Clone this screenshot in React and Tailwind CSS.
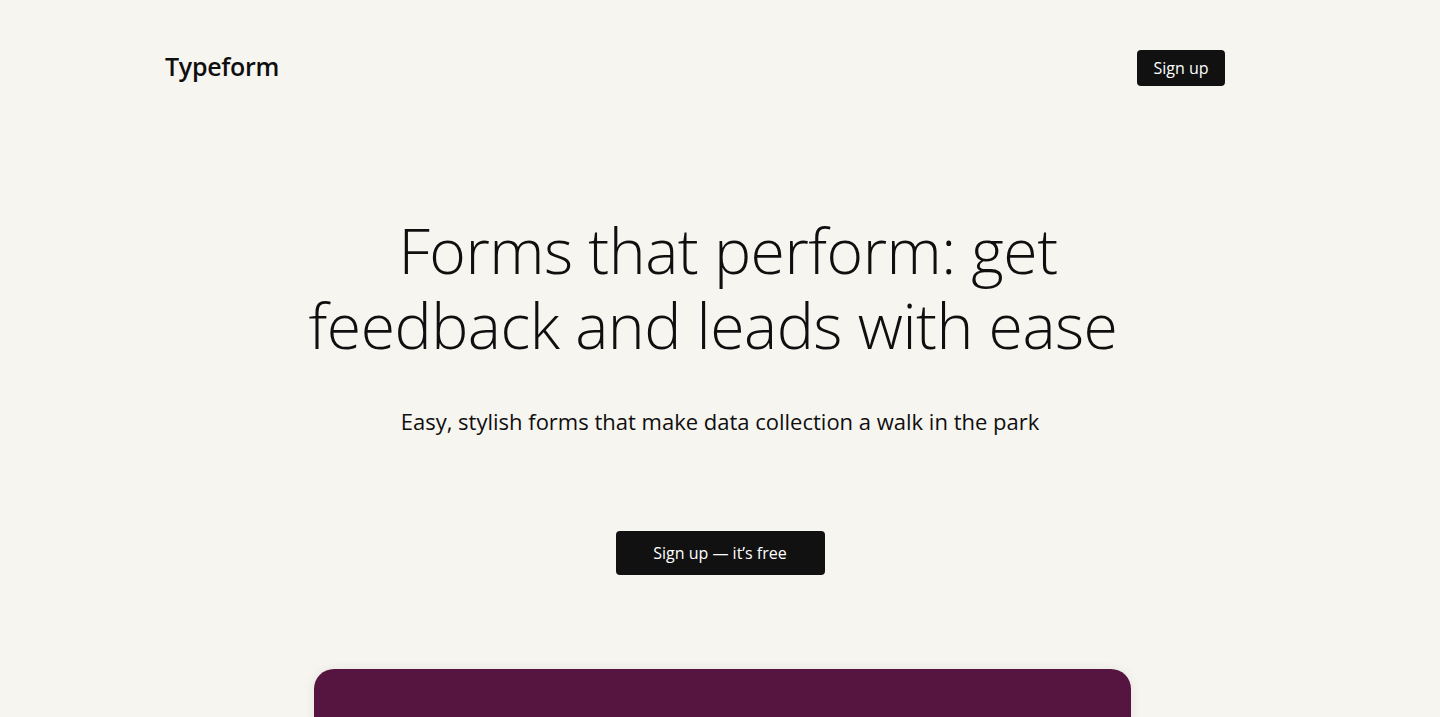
export default function App() {
  return (
    <div className="min-h-screen bg-[#f7f5f0] text-[#0f0f0f] overflow-hidden" style={{ fontFamily: '"Open Sans", "Liberation Sans", sans-serif' }}>
      <header className="flex items-center justify-between pl-[165px] pr-[215px] pt-[50px]">
        <div className="text-[25px] font-semibold tracking-[-0.3px] leading-none -mt-[3px]">Typeform</div>
        <button className="h-[36px] w-[88px] rounded-[4px] bg-[#111111] text-white text-[16px] leading-none">Sign up</button>
      </header>
      <main className="flex flex-col items-center">
        <h1 className="mt-[126px] text-center text-[62.5px] font-light leading-[75px] tracking-[-0.5px]">
          <span className="block pl-[16px]">Forms that perform: get</span>
          <span className="block pr-[14px]">feedback and leads with ease</span>
        </h1>
        <p className="mt-[44px] text-[22px] leading-[30px] font-normal">Easy, stylish forms that make data collection a walk in the park</p>
        <button className="mt-[95px] h-[44px] w-[209px] rounded-[4px] bg-[#111111] text-white text-[16px] font-medium">Sign up — it’s free</button>
        <div className="mt-[94px] ml-[4px] h-[200px] w-[817px] rounded-t-[20px] bg-[#551540] shadow-[0_0_12px_rgba(0,0,0,0.08)]"></div>
      </main>
    </div>
  );
}
